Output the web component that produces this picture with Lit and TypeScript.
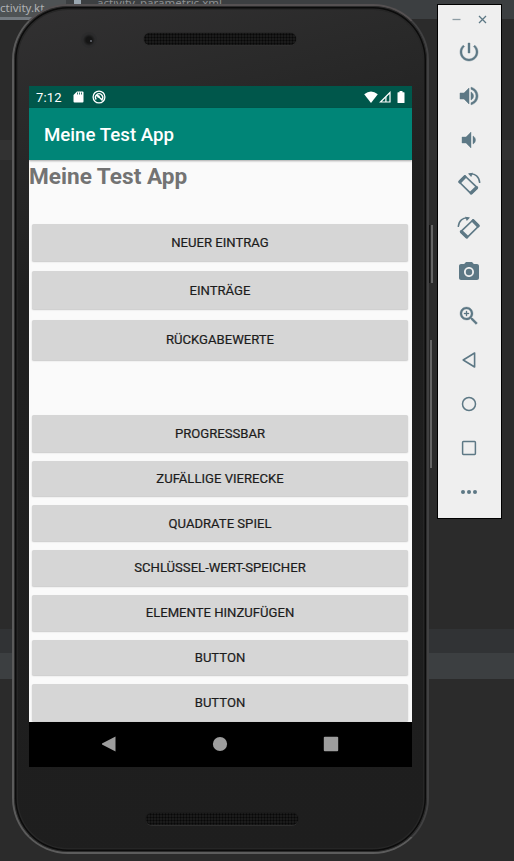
import { LitElement, html, svg, css } from "lit";
import { customElement } from "lit/decorators.js";

const tiltedPhone = svg`<path fill="none" stroke="currentColor" stroke-width="1.700" stroke-linejoin="round" d="M8 4 2.200 10 14 21.600 20.200 15.600Z"/><path fill="none" stroke="currentColor" stroke-width="3.400" stroke-linecap="round" d="M3 9.800 7.800 4.900M14.300 20.800 19.500 15.700"/><path fill="none" stroke="currentColor" stroke-width="1.400" d="M12.500 2C18 1 22.500 5 22.700 11"/><path d="m11 1.600 5-.8-1.800 4.200Z"/>`;

const ICONS = [
  svg`<path d="M13 3h-2v10h2V3zm4.83 2.17l-1.42 1.42C17.99 7.86 19 9.81 19 12c0 3.87-3.13 7-7 7s-7-3.13-7-7c0-2.19 1.01-4.14 2.58-5.42L6.17 5.17C4.23 6.82 3 9.26 3 12c0 4.97 4.03 9 9 9s9-4.03 9-9c0-2.74-1.23-5.18-3.17-6.83z" stroke="currentColor" stroke-width=".4"/>`,
  svg`<path d="M3 9v6h4l5 5V4L7 9H3zm13.5 3c0-1.77-1.02-3.29-2.5-4.03v8.05c1.48-.73 2.5-2.25 2.5-4.02zM14 3.23v2.06c2.89.86 5 3.54 5 6.71s-2.11 5.85-5 6.71v2.06c4.01-.91 7-4.49 7-8.77s-2.99-7.86-7-8.77z" stroke="currentColor" stroke-width=".5"/>`,
  svg`<path d="M18.500 12c0-1.77-1.02-3.29-2.5-4.03v8.05c1.480-.73 2.500-2.250 2.500-4.020zM5 9v6h4l5 5V4L9 9H5z" stroke="currentColor" stroke-width=".4"/>`,
  tiltedPhone,
  svg`<g transform="translate(24 0) scale(-1 1)">${tiltedPhone}</g>`,
  svg`<circle cx="12" cy="12" r="3.200"/><path d="M9 2 7.170 4H4c-1.100 0-2 .9-2 2v12c0 1.100.9 2 2 2h16c1.100 0 2-.9 2-2V6c0-1.100-.9-2-2-2h-3.170L15 2H9zm3 15c-2.760 0-5-2.240-5-5s2.240-5 5-5 5 2.240 5 5-2.240 5-5 5z"/>`,
  svg`<path d="M15.500 14h-.79l-.28-.27C15.410 12.590 16 11.110 16 9.500 16 5.910 13.090 3 9.500 3S3 5.910 3 9.500 5.910 16 9.500 16c1.610 0 3.090-.59 4.230-1.570l.27.28v.79l5 4.990L20.490 19l-4.990-5zm-6 0C7.010 14 5 11.990 5 9.500S7.010 5 9.500 5 14 7.010 14 9.500 11.990 14 9.500 14zM12 10h-2v2H9v-2H7V9h2V7h1v2h2v1z" stroke="currentColor" stroke-width=".3"/>`,
  svg`<path fill="none" stroke="currentColor" stroke-width="1.600" stroke-linejoin="round" d="M17.600 5v14L6.200 12Z"/>`,
  svg`<circle cx="12" cy="12" r="6.500" fill="none" stroke="currentColor" stroke-width="1.500"/>`,
  svg`<rect x="5.600" y="5.600" width="12.800" height="12.800" rx=".8" fill="none" stroke="currentColor" stroke-width="1.500"/>`,
  svg`<circle cx="6" cy="12" r="2"/><circle cx="12" cy="12" r="2"/><circle cx="18" cy="12" r="2"/>`,
];

@customElement("emulator-tools")
class EmulatorTools extends LitElement {
  static styles = css`
    :host { display: flex; flex-direction: column; box-sizing: border-box; width: 65px; height: 515px; background: #efefef; border: 1px solid #000; color: #5d7885; }
    .window { display: flex; justify-content: space-between; align-items: center; height: 25px; padding: 3px 14px 0 14px; box-sizing: border-box; }
    .window svg { width: 9px; height: 9px; }
    .tool { display: flex; height: 44px; align-items: center; justify-content: center; padding-right: 1px; }
    .tool svg { width: 24px; height: 24px; fill: currentColor; }
  `;
  render() {
    return html`<div class="window">
        <svg viewBox="0 0 9 9"><path d="M.5 4.500h8" stroke="#8d9ca4" stroke-width="1.300"/></svg>
        <svg viewBox="0 0 9 9"><path d="m1 1 7 7M8 1 1 8" stroke="#5d7885" stroke-width="1.300"/></svg>
      </div>
      ${ICONS.map((i) => html`<div class="tool"><svg viewBox="0 0 24 24">${i}</svg></div>`)}`;
  }
}

@customElement("phone-screen")
class PhoneScreen extends LitElement {
  static styles = css`
    :host { display: flex; flex-direction: column; width: 383px; height: 681px; background: #fafafa; font-family: Roboto, sans-serif; overflow: hidden; }
    .status { display: flex; align-items: center; flex: none; height: 22px; box-sizing: border-box; padding: 0 7px; background: #00574b; color: #fff; font-size: 13px; }
    .status svg { fill: #fff; flex: none; }
    .time { width: 37px; letter-spacing: .2px; }
    .sd { width: 11px; height: 12px; margin-right: 8px; }
    .sync { width: 14px; height: 14px; }
    .gap { flex: 1; }
    .wifi { width: 14px; height: 12px; }
    .cell { width: 12px; height: 12px; margin: 0 6px 0 1px; }
    .battery { width: 8px; height: 12px; }
    .appbar { display: flex; flex: none; align-items: center; height: 52px; padding: 1px 0 0 15px; box-sizing: border-box; background: #008577; color: #fff; font-size: 18.700px; font-weight: 500; box-shadow: 0 1px 2px #0005; z-index: 1; }
    .content { flex: 1; min-height: 0; overflow: hidden; display: flex; flex-direction: column; }
    .heading { flex: none; height: 61px; box-sizing: border-box; margin: 0; padding-top: 3px; font-size: 22.600px; line-height: 27px; font-weight: 700; color: #737373; }
    .list { display: flex; flex-direction: column; padding: 3px 4px 0 3px; gap: 9px; }
    .item { flex: none; display: flex; align-items: center; justify-content: center; height: 35.800px; background: #d6d6d6; border-radius: 1.500px; box-shadow: 0 1px 1.500px #0003; font-size: 13.100px; font-weight: 400; color: #1c1c1c; -webkit-text-stroke: .2px #1c1c1c; }
    .tall { height: 38px; margin-top: 1.500px; }
    .taller { height: 40.500px; margin-top: 1.500px; }
    .first { height: 36.500px; }
    .after { height: 36.500px; margin-top: 46px; }
    .nav { display: flex; flex: none; justify-content: center; align-items: center; gap: 95px; height: 45px; padding: 0 2px 2px 0; box-sizing: border-box; background: #000; }
    .nav svg { width: 16px; height: 16px; fill: #9d9d9d; }
  `;
  private items: [string, string][] = [
    ["NEUER EINTRAG", "first"], ["EINTRÄGE", "tall"], ["RÜCKGABEWERTE", "taller"],
    ["PROGRESSBAR", "after"], ["ZUFÄLLIGE VIERECKE", ""], ["QUADRATE SPIEL", ""],
    ["SCHLÜSSEL-WERT-SPEICHER", ""], ["ELEMENTE HINZUFÜGEN", ""], ["BUTTON", ""], ["BUTTON", "first"],
  ];
  render() {
    return html`
      <div class="status">
        <span class="time">7:12</span>
        <svg class="sd" viewBox="0 0 11 12"><path d="M4 .5h5.500q1 0 1 1v9q0 1-1 1h-8q-1 0-1-1V4Z"/><path d="M4.500 1.500v2M6.500 1.500v2M8.500 1.500v2" stroke="#00574b" stroke-width=".8"/></svg>
        <svg class="sync" viewBox="0 0 14 14"><circle cx="7" cy="7" r="5.900" fill="none" stroke="#fff" stroke-width="1.300"/><path d="M4.200 9.500a3.600 3.600 0 1 1 5.800 0M4.500 4.500l6 6" fill="none" stroke="#fff" stroke-width="1.300"/><circle cx="6.500" cy="6.500" r="1.300"/></svg>
        <span class="gap"></span>
        <svg class="wifi" viewBox="0 0 14 12"><path d="M7 12 .2 3.200Q7-2.200 13.800 3.200Z"/></svg>
        <svg class="cell" viewBox="0 0 12 12"><path d="M1.500 11 11 1.500V11Z" fill="none" stroke="#fff" stroke-width="1.200"/><path d="M7.500 5.500V11H6.300V6.500Z"/></svg>
        <svg class="battery" viewBox="0 0 8 12"><path d="M2.500 0h3v1.200H7q.5 0 .5.5v9.800q0 .5-.5.5H1q-.5 0-.5-.5V1.700q0-.5.5-.5h1.500Z"/></svg>
      </div>
      <div class="appbar">Meine Test App</div>
      <div class="content">
        <h1 class="heading">Meine Test App</h1>
        <div class="list">${this.items.map(([t, c]) => html`<div class="item ${c}">${t}</div>`)}</div>
      </div>
      <div class="nav">
        <svg viewBox="0 0 16 16"><path d="M14.500.5v15L1 8.500V7.500Z"/></svg>
        <svg viewBox="0 0 16 16"><circle cx="8" cy="8" r="7.100"/></svg>
        <svg viewBox="0 0 16 16"><rect x=".8" y=".8" width="14.400" height="14.400" rx="1"/></svg>
      </div>`;
  }
}

@customElement("app-root")
class AppRoot extends LitElement {
  static styles = css`
    :host { display: block; position: relative; width: 514px; height: 861px; overflow: hidden; background: linear-gradient(#3c3f41 0 19px, #2b2b2b 19px 140px, #323232 140px 160px, #2b2b2b 160px 629px, #313335 629px 653px, #3c3f41 653px 679px, #2b2b2b 679px); }
    .tabs { display: flex; height: 20px; font: 11.500px/16px "Noto Sans", sans-serif; color: #afb1b3; white-space: nowrap; }
    .tab { width: 66px; flex: none; background: #4e5254; border-bottom: 3px solid #747a80; height: 17px; }
    .other { padding-left: 16px; height: 16px; line-height: 5px; color: #8d8f91; }
    .doc { width: 7px; height: 4px; margin-left: 8px; background: #9aa7b0; }
    .phone { position: absolute; left: 12px; top: 4px; width: 417px; height: 850px; box-sizing: border-box; border-radius: 56px; padding: 1px; border: 2px solid #5b5b5b; border-top-color: #555152; border-right-color: #414142; border-bottom-color: #5c5c5c; background: linear-gradient(165deg, #323132 0, #292929 14%, #1f1f1f 30%, #1e1e1e 100%); box-shadow: inset 0 0 0 1px #2c2c2c, inset 0 0 0 2.500px #0b0b0b, inset 0 0 0 4px #262626; display: flex; flex-direction: column; align-items: center; }
    .top { height: 79px; width: 100%; flex: none; display: flex; box-sizing: border-box; padding: 25px 0 0 66px; gap: 47px; }
    .camera { width: 16px; height: 16px; border-radius: 50%; background: radial-gradient(circle, #151515 0 3px, #2b2b2c 6px 8px); }
    .camera::after { content: ""; display: block; width: 2px; height: 2px; margin: 8px 0 0 9px; border-radius: 50%; background: #6b6f78; }
    .speaker { width: 152px; height: 12px; border-radius: 6px; background: radial-gradient(circle, #080808 .8px, transparent 1.200px) 0 0 / 3px 3px #1b1b1b; box-shadow: 0 0 1px #090909, 0 1px #333; }
    .top .speaker { margin-top: 1px; }
    .bottom { padding-top: 46px; padding-left: 2px; }
    .camera { display: flow-root; }
    .key { position: absolute; left: 429px; width: 4px; box-sizing: border-box; background: #292929; border-right: 2px solid #666; border-left: 1px solid #111; }
    .power { top: 225px; height: 58px; }
    .volume { top: 340px; height: 128px; left: 428px; }
    emulator-tools { position: absolute; left: 437px; top: 4px; }
  `;
  render() {
    return html`
      <div class="tabs"><div class="tab">ctivity.kt</div><div class="doc"></div><div class="other">activity_parametric.xml</div></div>
      <div class="key power"></div><div class="key volume"></div>
      <div class="phone">
        <div class="top"><div class="camera"></div><div class="speaker"></div></div>
        <phone-screen></phone-screen>
        <div class="bottom"><div class="speaker"></div></div>
      </div>
      <emulator-tools></emulator-tools>`;
  }
}
